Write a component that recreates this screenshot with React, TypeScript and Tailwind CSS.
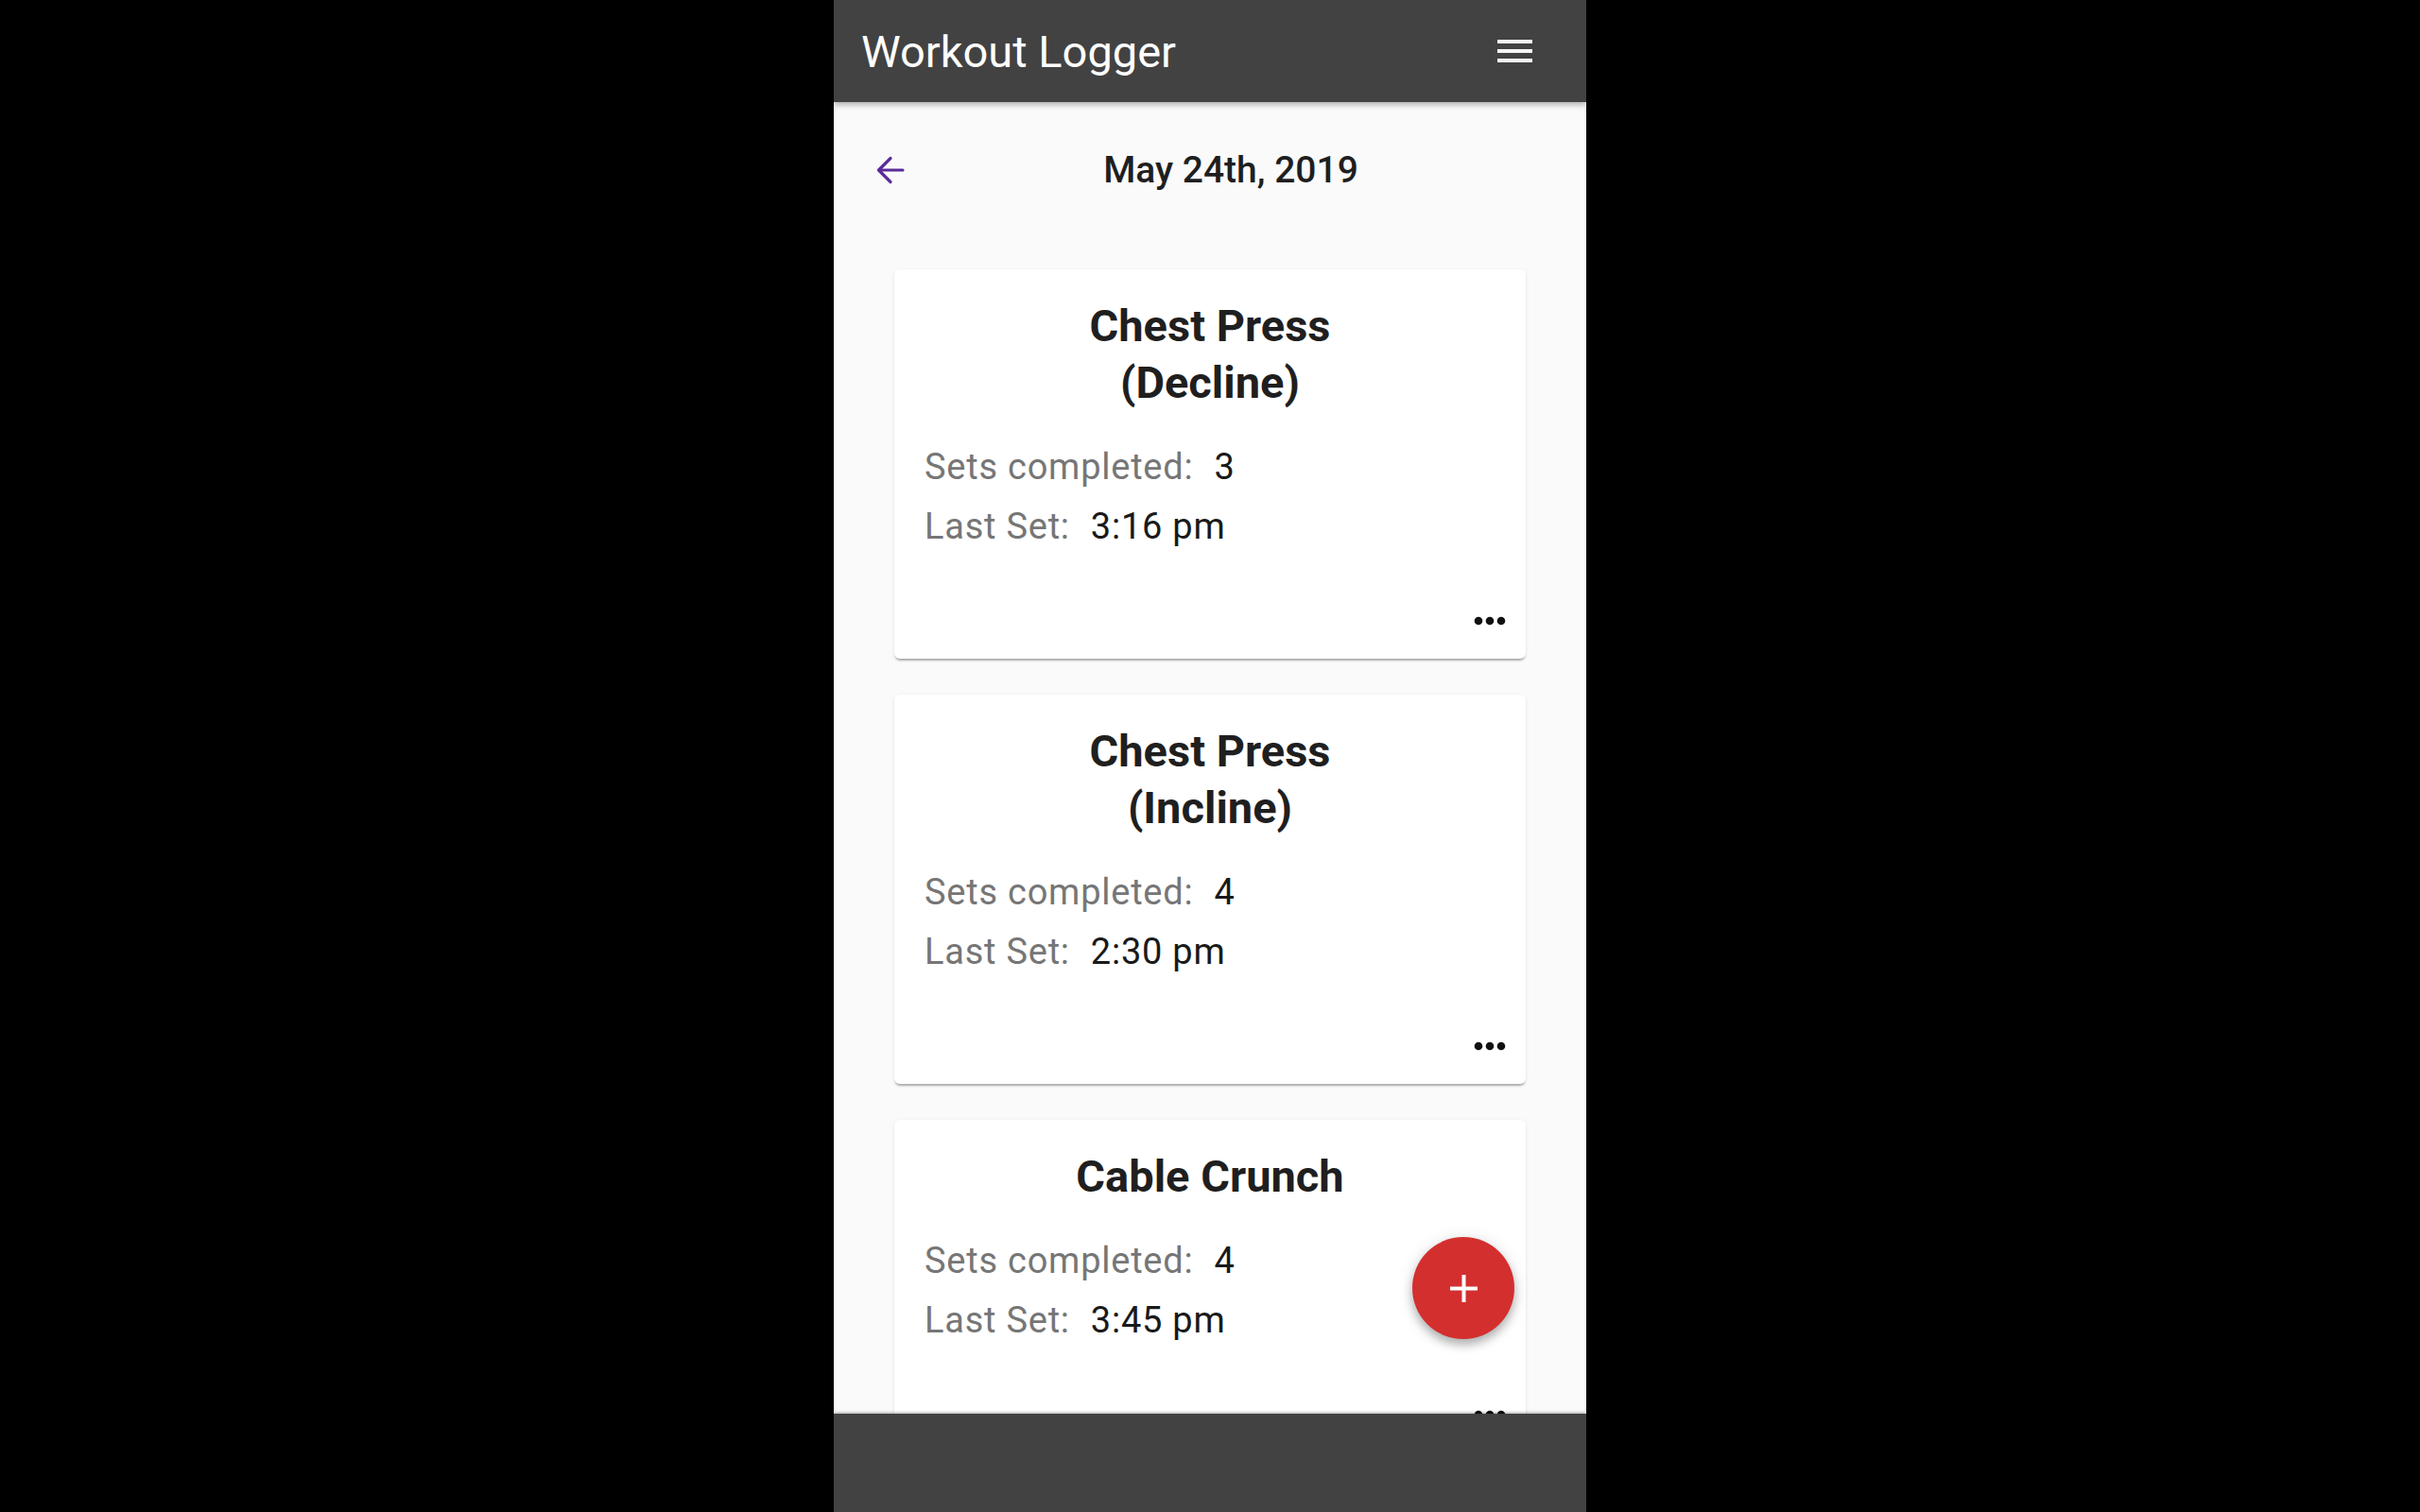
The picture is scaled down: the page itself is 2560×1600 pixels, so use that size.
import React from "react";

type Item = { title: string[]; sets: number; last: string };

const items: Item[] = [
  { title: ["Chest Press", "(Decline)"], sets: 3, last: "3:16 pm" },
  { title: ["Chest Press", "(Incline)"], sets: 4, last: "2:30 pm" },
  { title: ["Cable Crunch"], sets: 4, last: "3:45 pm" },
];

function Dots() {
  return (
    <svg width="34" height="10" viewBox="0 0 34 10">
      <circle cx="5" cy="5" r="4.3" fill="#111" />
      <circle cx="17" cy="5" r="4.3" fill="#111" />
      <circle cx="29" cy="5" r="4.3" fill="#111" />
    </svg>
  );
}

function Card({ item }: { item: Item }) {
  return (
    <div className="bg-white rounded-[6px] pt-[30px] shadow-[0_3px_2px_-1px_rgba(0,0,0,0.28),0_1px_4px_rgba(0,0,0,0.08)] shrink-0">
      <div className="text-center text-[47px] leading-[60px] font-bold text-[#1f1f1f]">
        {item.title.map((t) => (
          <div key={t}>{t}</div>
        ))}
      </div>
      <div className="mt-[28px] px-[32px] text-[38px] leading-[63px] tracking-[0.02em]">
        <div>
          <span className="text-[#767676]">Sets completed:</span>
          <span className="ml-[22px] text-[#1a1a1a]">{item.sets}</span>
        </div>
        <div>
          <span className="text-[#767676]">Last Set:</span>
          <span className="ml-[22px] text-[#1a1a1a]">{item.last}</span>
        </div>
      </div>
      <div className="h-[108px] flex justify-end items-end pr-[21px] pb-[35px]">
        <Dots />
      </div>
    </div>
  );
}

export default function App() {
  return (
    <div
      className="w-full h-[1600px] bg-black flex justify-center overflow-hidden"
      style={{ fontFamily: "Roboto, 'Noto Sans', sans-serif" }}
    >
      <div className="w-[796px] h-full flex flex-col bg-[#fafafa] relative overflow-hidden">
        <header className="h-[108px] shrink-0 bg-[#424242] flex items-center justify-between pl-[29px] pr-[57px] relative z-10 shadow-[0_3px_6px_rgba(0,0,0,0.3)]">
          <span className="text-white text-[47px] leading-none">Workout Logger</span>
          <svg width="37" height="24" viewBox="0 0 37 24">
            <rect x="0" y="0" width="37" height="4" fill="#f5f5f5" />
            <rect x="0" y="10" width="37" height="4" fill="#f5f5f5" />
            <rect x="0" y="20" width="37" height="4" fill="#f5f5f5" />
          </svg>
        </header>
        <main className="flex-1 relative overflow-hidden">
          <div className="flex items-center h-[44px] mt-[50px] pl-[45px] pr-[31px]">
            <svg width="30" height="30" viewBox="0 0 30 30" fill="none" stroke="#5b2b9a" strokeWidth="3.2" strokeLinecap="round" strokeLinejoin="round">
              <path d="M28 15H3" />
              <path d="M15 2.5L2.5 15L15 27.5" />
            </svg>
            <div className="flex-1 text-center text-[39px] leading-[44px] font-medium text-[#1f1f1f]">
              May 24th, 2019
            </div>
          </div>
          <div className="flex flex-col gap-[38px] px-[64px] mt-[83px]">
            {items.map((it, i) => (
              <Card key={i} item={it} />
            ))}
          </div>
          <button className="absolute right-[76px] bottom-[79px] w-[108px] h-[108px] rounded-full bg-[#d32f2f] flex items-center justify-center shadow-[0_6px_10px_rgba(0,0,0,0.25),0_2px_18px_rgba(0,0,0,0.12)]">
            <svg width="29" height="29" viewBox="0 0 29 29">
              <rect x="12.5" y="0" width="4" height="29" fill="#fff" />
              <rect x="0" y="12.5" width="29" height="4" fill="#fff" />
            </svg>
          </button>
        </main>
        <footer className="h-[104px] shrink-0 bg-[#424242] relative z-10 shadow-[0_-1px_3px_rgba(0,0,0,0.35)]" />
      </div>
    </div>
  );
}
